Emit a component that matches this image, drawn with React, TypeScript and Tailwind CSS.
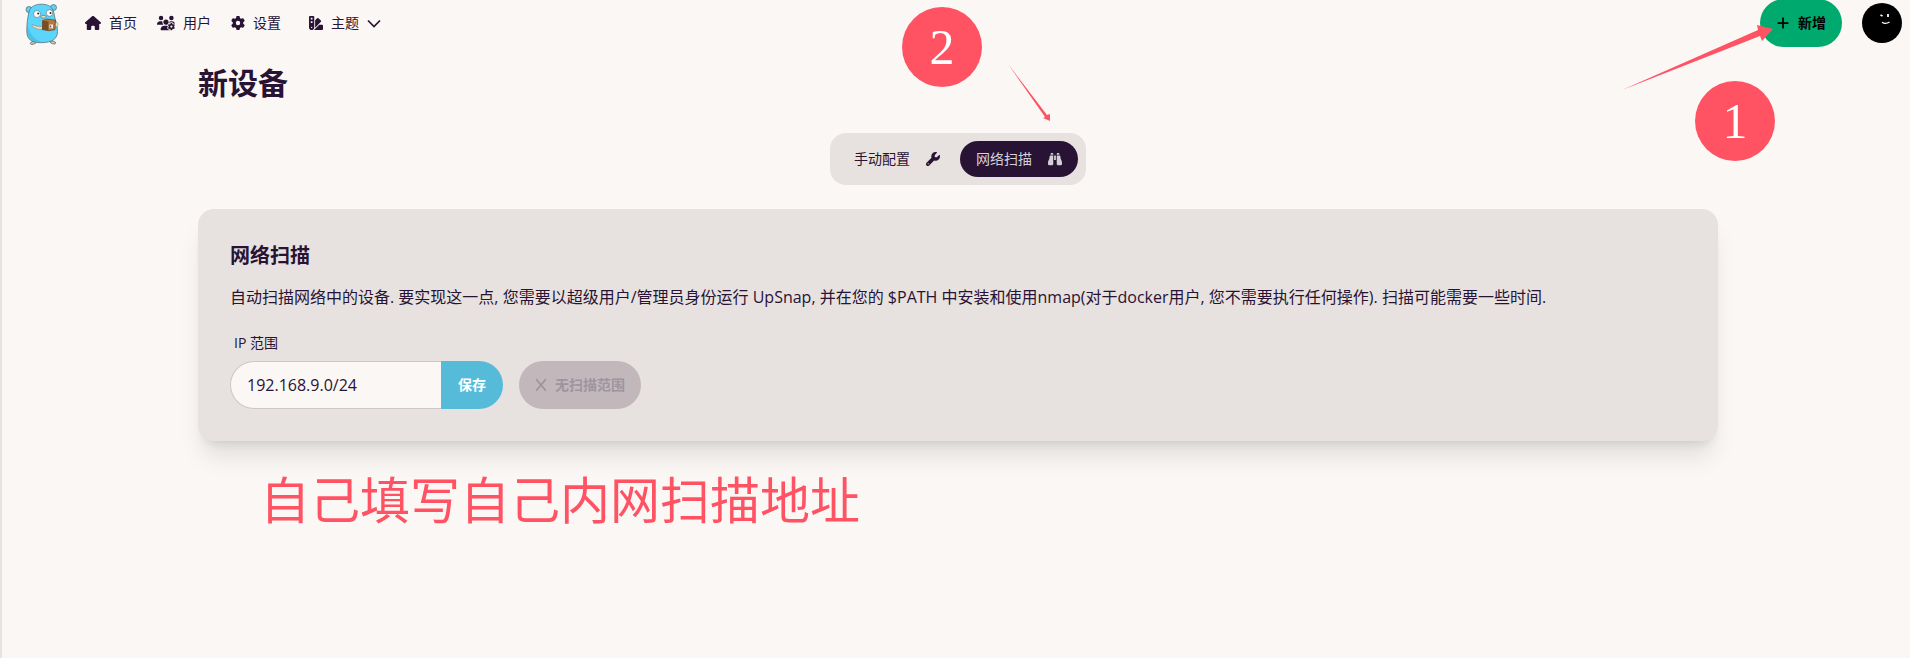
import { useState } from 'react';
import type { ReactNode } from 'react';
import { FaBinoculars, FaGear, FaHouse, FaPlus, FaSwatchbook, FaUsersGear, FaWrench, FaX } from 'react-icons/fa6';

function Gopher() {
  return (
    <svg viewBox="0 0 34 44" className="w-[34px] h-[44px]" aria-hidden="true">
      <g stroke="#4a6470" strokeWidth="0.7">
        <ellipse cx="8" cy="42" rx="2.800" ry="1.300" fill="#e0c9a6" transform="rotate(-12 8 42)" />
        <ellipse cx="28" cy="41.500" rx="2.800" ry="1.300" fill="#e0c9a6" transform="rotate(15 28 41.500)" />
        <circle cx="4" cy="8.500" r="3" fill="#5ed3f8" />
        <circle cx="28.500" cy="6.500" r="3" fill="#5ed3f8" />
        <path
          d="M3.500 13C4.500 6 9 3.500 16 3.200c8-.2 12 3.300 13 9.300 .8 6 3.500 11 3.500 18 0 7.500-5.400 11-16 11.200S1.800 38 1.800 30C1.800 23 2.500 18 3.500 13z"
          fill="#5cd5fb"
        />
      </g>
      <path d="M2.500 23c-1 8 0 13 4 16 3 2.200 8 2.300 10 2C8 38 4.500 32 2.500 23z" fill="#3fb4dc" opacity="0.6" />
      <g stroke="#4a4a4a" strokeWidth="0.5">
        <circle cx="12" cy="13" r="3.500" fill="#fff" />
        <circle cx="24.500" cy="12" r="3.300" fill="#fff" />
        <ellipse cx="18.500" cy="15.800" rx="2.700" ry="1.400" fill="#eddcbd" />
      </g>
      <circle cx="13.200" cy="12.600" r="1" fill="#222" />
      <circle cx="25.500" cy="12" r="1" fill="#222" />
      <path d="M7.500 23.500c3 2 6 2 10 2v2.700c-4.500.5-8-.8-10.500-3.300z" fill="#efe0c2" stroke="#6b5b45" strokeWidth="0.4" />
      <ellipse cx="31" cy="23.500" rx="2" ry="2.500" fill="#efe0c2" stroke="#6b5b45" strokeWidth="0.4" />
      <path d="M17.500 19.500l5-1.500 8 1.200-.5 9.500-5.800 1-6.700-1z" fill="#b27a41" stroke="#4d351c" strokeWidth="0.6" />
      <path d="M17.500 19.500l6 1-.2 9-5.800-1z" fill="#7a4c23" />
      <path d="M24.500 23.500h3.500v3.800h-3.500z" fill="#eee" />
      <path d="M25.700 24.500v2" stroke="#333" strokeWidth="0.9" />
    </svg>
  );
}

function Avatar() {
  return (
    <svg viewBox="0 0 40 40" className="size-10" aria-hidden="true">
      <circle cx="20" cy="20" r="20" fill="#000" />
      <g stroke="#fff" fill="none">
        <path d="M18.500 12l2 1M26 11v3" strokeWidth="1.800" />
        <path d="M20 19.300c2 1.300 5 1.300 7.500-.3" strokeWidth="1.300" />
      </g>
    </svg>
  );
}

function NavItem({ icon, children }: { icon: ReactNode; children: ReactNode }) {
  return (
    <a href="#" className="flex items-center gap-2 px-2 text-sm">
      {icon}
      {children}
    </a>
  );
}

function StepBadge({ className, children }: { className: string; children: ReactNode }) {
  return (
    <div
      className={`absolute flex size-20 items-center justify-center rounded-full bg-[#ff5364] font-['Liberation_Serif',serif] text-[50px] leading-none text-white ${className}`}
    >
      {children}
    </div>
  );
}

const tabs = [
  { id: 'manual', label: '手动配置', Icon: FaWrench },
  { id: 'scan', label: '网络扫描', Icon: FaBinoculars },
];

export default function App() {
  const [tab, setTab] = useState('scan');
  const [range, setRange] = useState('192.168.9.0/24');

  return (
    <div className="relative min-h-screen overflow-hidden border-l-2 border-[#e6e4e3] bg-[#faf7f5] pl-1 font-['Open_Sans','Noto_Sans_CJK_SC',sans-serif] text-base text-[#291334]">
      <header className="-mt-px flex h-12 items-center justify-between px-2">
        <div className="flex items-center">
          <a href="#" aria-label="UpSnap" className="pl-[11px]">
            <Gopher />
          </a>
          <nav className="ml-[18px] flex items-center gap-1">
            <NavItem icon={<FaHouse className="size-4" />}>首页</NavItem>
            <NavItem icon={<FaUsersGear className="size-[18px]" />}>用户</NavItem>
            <NavItem icon={<FaGear className="size-[14px]" />}>设置</NavItem>
            <button type="button" className="ml-2 flex items-center gap-2 px-2 text-sm">
              <FaSwatchbook className="size-[14px]" />
              主题
              <svg viewBox="0 0 14 14" className="size-[14px]" fill="none" stroke="currentColor" strokeWidth="1.700" aria-hidden="true">
                <path d="M1 4.500l6 6 6-6" />
              </svg>
            </button>
          </nav>
        </div>
        <div className="flex items-center gap-5">
          <button
            type="button"
            className="flex h-12 items-center gap-2 rounded-3xl bg-[#00a96e] px-4 text-sm font-semibold text-black"
          >
            <FaPlus className="size-[14px]" />
            新增
          </button>
          <button type="button" aria-label="账户">
            <Avatar />
          </button>
        </div>
      </header>

      <main className="mx-auto max-w-[1536px] px-2">
        <h1 className="mt-4 text-3xl leading-10 font-bold">新设备</h1>

        <div role="tablist" className="mx-auto mt-[30px] flex w-fit gap-1 rounded-2xl bg-[#e7e2df] p-2">
          {tabs.map(({ id, label, Icon }) => (
            <button
              key={id}
              type="button"
              role="tab"
              aria-selected={tab === id}
              onClick={() => setTab(id)}
              className={`flex h-9 items-center gap-4 rounded-full px-4 text-sm ${
                tab === id ? 'bg-[#291334] text-[#d4d0d6]' : ''
              }`}
            >
              {label}
              <Icon className="size-[14px]" />
            </button>
          ))}
        </div>

        <section className="mt-6 rounded-2xl bg-[#e7e2df] p-8 shadow-xl">
          <h2 className="text-xl leading-[30px] font-bold">网络扫描</h2>
          <p className="mt-[14px]">
            自动扫描网络中的设备. 要实现这一点, 您需要以超级用户/管理员身份运行 UpSnap, 并在您的 $PATH
            中安装和使用nmap(对于docker用户, 您不需要执行任何操作). 扫描可能需要一些时间.
          </p>
          <form className="mt-5" onSubmit={(e) => e.preventDefault()}>
            <label htmlFor="range" className="block px-1 text-sm leading-7">
              IP 范围
            </label>
            <div className="mt-1 flex gap-4">
              <div className="flex">
                <input
                  id="range"
                  type="text"
                  value={range}
                  onChange={(e) => setRange(e.target.value)}
                  className="h-12 w-[211px] rounded-l-3xl border border-r-0 border-[#cdc6ca] bg-[#faf7f5] px-4 outline-none"
                />
                <button type="submit" className="h-12 rounded-r-3xl bg-[#56bbd9] px-[17px] text-sm font-bold text-white">
                  保存
                </button>
              </div>
              <button
                type="button"
                disabled
                className="flex h-12 items-center gap-2 rounded-3xl bg-[#c2b8bc] px-4 text-sm font-semibold text-[#9f949e]"
              >
                <FaX className="h-[14px] w-3" />
                无扫描范围
              </button>
            </div>
          </form>
        </section>

        <p className="mt-6 ml-[62px] text-[50px] leading-[70px] text-[#ff5364]">自己填写自己内网扫描地址</p>
      </main>

      {/* walkthrough markers drawn over the page */}
      <StepBadge className="top-[81px] right-[135px]">1</StepBadge>
      <svg viewBox="0 0 152 66" className="absolute top-[25px] right-[136px] h-[66px] w-[152px]" fill="#ff5364" aria-hidden="true">
        <path d="M0 65L136 5l-1-5 16 4-11 12-2-5z" />
      </svg>
      <StepBadge className="top-[7px] left-[calc(50%-54px)]">2</StepBadge>
      <svg viewBox="0 0 44 58" className="absolute top-[64px] left-[calc(50%+52px)] h-[58px] w-[44px]" fill="#ff5364" aria-hidden="true">
        <path d="M0 0L39 51l3-1v7l-7-3 2-1z" />
      </svg>
    </div>
  );
}
